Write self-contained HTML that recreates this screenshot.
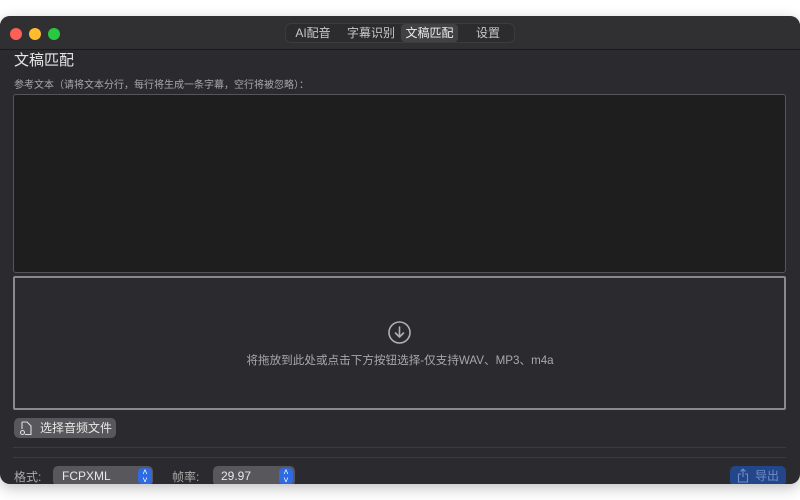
<!DOCTYPE html>
<html><head><meta charset="utf-8"><style>
*{margin:0;padding:0;box-sizing:border-box}
body{width:800px;height:500px;background:#fff;font-family:"Liberation Sans","Noto Sans CJK SC",sans-serif;position:relative;overflow:hidden}
.win{position:absolute;left:0;top:16px;width:800px;height:468px;background:#2b2a2f;border-radius:10px;overflow:hidden;box-shadow:0 4px 14px rgba(0,0,0,.25)}
.tb{position:absolute;left:0;top:0;width:800px;height:34px;background:#303033;border-bottom:1px solid #1a1a1a}
.dot{position:absolute;top:12px;width:12px;height:12px;border-radius:50%}
.seg{position:absolute;left:285px;top:7px;width:230px;height:20px;border:1px solid #3c3c3f;border-radius:6px;background:#2c2c2f}
.tab{position:absolute;top:0;height:18px;line-height:18px;font-size:12px;color:#c8c8c8;text-align:center}
.abs{position:absolute}
</style></head><body>
<div class="win">
 <div class="tb">
  <div class="dot" style="left:10px;background:#fe5f57"></div>
  <div class="dot" style="left:29px;background:#febc2e"></div>
  <div class="dot" style="left:48px;background:#28c840"></div>
  <div class="seg">
   <div class="tab" style="left:0px;width:54px">AI配音</div>
   <div class="tab" style="left:56px;width:58px">字幕识别</div>
   <div class="tab" style="left:115px;width:57px;background:#414144;border-radius:4px;color:#eee">文稿匹配</div>
   <div class="tab" style="left:175px;width:54px">设置</div>
  </div>
 </div>
 <div class="abs" style="left:14px;top:33px;font-size:15px;color:#e6e6e6">文稿匹配</div>
 <div class="abs" style="left:14px;top:60px;font-size:10px;color:#a8a8a8">参考文本（请将文本分行，每行将生成一条字幕，空行将被忽略）：</div>
 <div class="abs" style="left:13px;top:78px;width:773px;height:179px;background:#1e1e1f;border:1px solid #55555a;border-radius:3px"></div>
 <div class="abs" style="left:13px;top:260px;width:773px;height:134px;border:2px solid #8a8a8e;border-radius:2px"></div>
 <svg class="abs" style="left:387px;top:304px" width="25" height="25" viewBox="0 0 25 25"><circle cx="12.5" cy="12.5" r="10.5" fill="none" stroke="#b0b0b0" stroke-width="1.6"/><path d="M12.5 7v10M8.5 13l4 4 4-4" fill="none" stroke="#b0b0b0" stroke-width="1.6" stroke-linecap="round" stroke-linejoin="round"/></svg>
 <div class="abs" style="left:0;width:800px;top:336px;text-align:center;font-size:11.6px;color:#a8a8a8">将拖放到此处或点击下方按钮选择-仅支持WAV、MP3、m4a</div>
 <div class="abs" style="left:14px;top:402px;width:102px;height:20px;background:#58585c;border-radius:5px;font-size:12px;color:#e8e8e8;line-height:20px;padding-left:26px">选择音频文件</div>
 <svg class="abs" style="left:19px;top:405px" width="14" height="15" viewBox="0 0 14 15"><path d="M3 1h5l4 4v8.5H6M3 1v7" fill="none" stroke="#ddd" stroke-width="1.1"/><circle cx="3.5" cy="11.5" r="2" fill="none" stroke="#ddd" stroke-width="1.1"/></svg>
 <div class="abs" style="left:13px;top:431px;width:773px;height:1px;background:#3c3c40"></div>
 <div class="abs" style="left:13px;top:441px;width:773px;height:1px;background:#3c3c40"></div>
 <div class="abs" style="left:14px;top:452px;font-size:12px;color:#aaa">格式:</div>
 <div class="abs" style="left:53px;top:450px;width:100px;height:20px;background:#58585c;border-radius:5px;font-size:12px;color:#e8e8e8;line-height:20px;padding-left:9px">FCPXML</div>
 <div class="abs" style="left:138px;top:452px;width:14px;height:16px;background:#2f6ae0;border-radius:4px;color:#fff;font-size:9px;text-align:center;line-height:8px">˄<br>˅</div>
 <div class="abs" style="left:172px;top:452px;font-size:12px;color:#aaa">帧率:</div>
 <div class="abs" style="left:213px;top:450px;width:82px;height:20px;background:#58585c;border-radius:5px;font-size:12px;color:#e8e8e8;line-height:20px;padding-left:8px">29.97</div>
 <div class="abs" style="left:279px;top:452px;width:14px;height:16px;background:#2f6ae0;border-radius:4px;color:#fff;font-size:9px;text-align:center;line-height:8px">˄<br>˅</div>
 <div class="abs" style="left:730px;top:450px;width:56px;height:20px;background:#23458a;border-radius:5px;font-size:12px;color:#6f8fc8;line-height:20px;padding-left:25px">导出</div>
 <svg class="abs" style="left:737px;top:452px" width="12" height="15" viewBox="0 0 12 15"><path d="M6 1v8M3.5 3.5L6 1l2.5 2.5M4 6H1.5v8h9V6H8" fill="none" stroke="#6f8fc8" stroke-width="1.1"/></svg>
</div>
</body></html>
